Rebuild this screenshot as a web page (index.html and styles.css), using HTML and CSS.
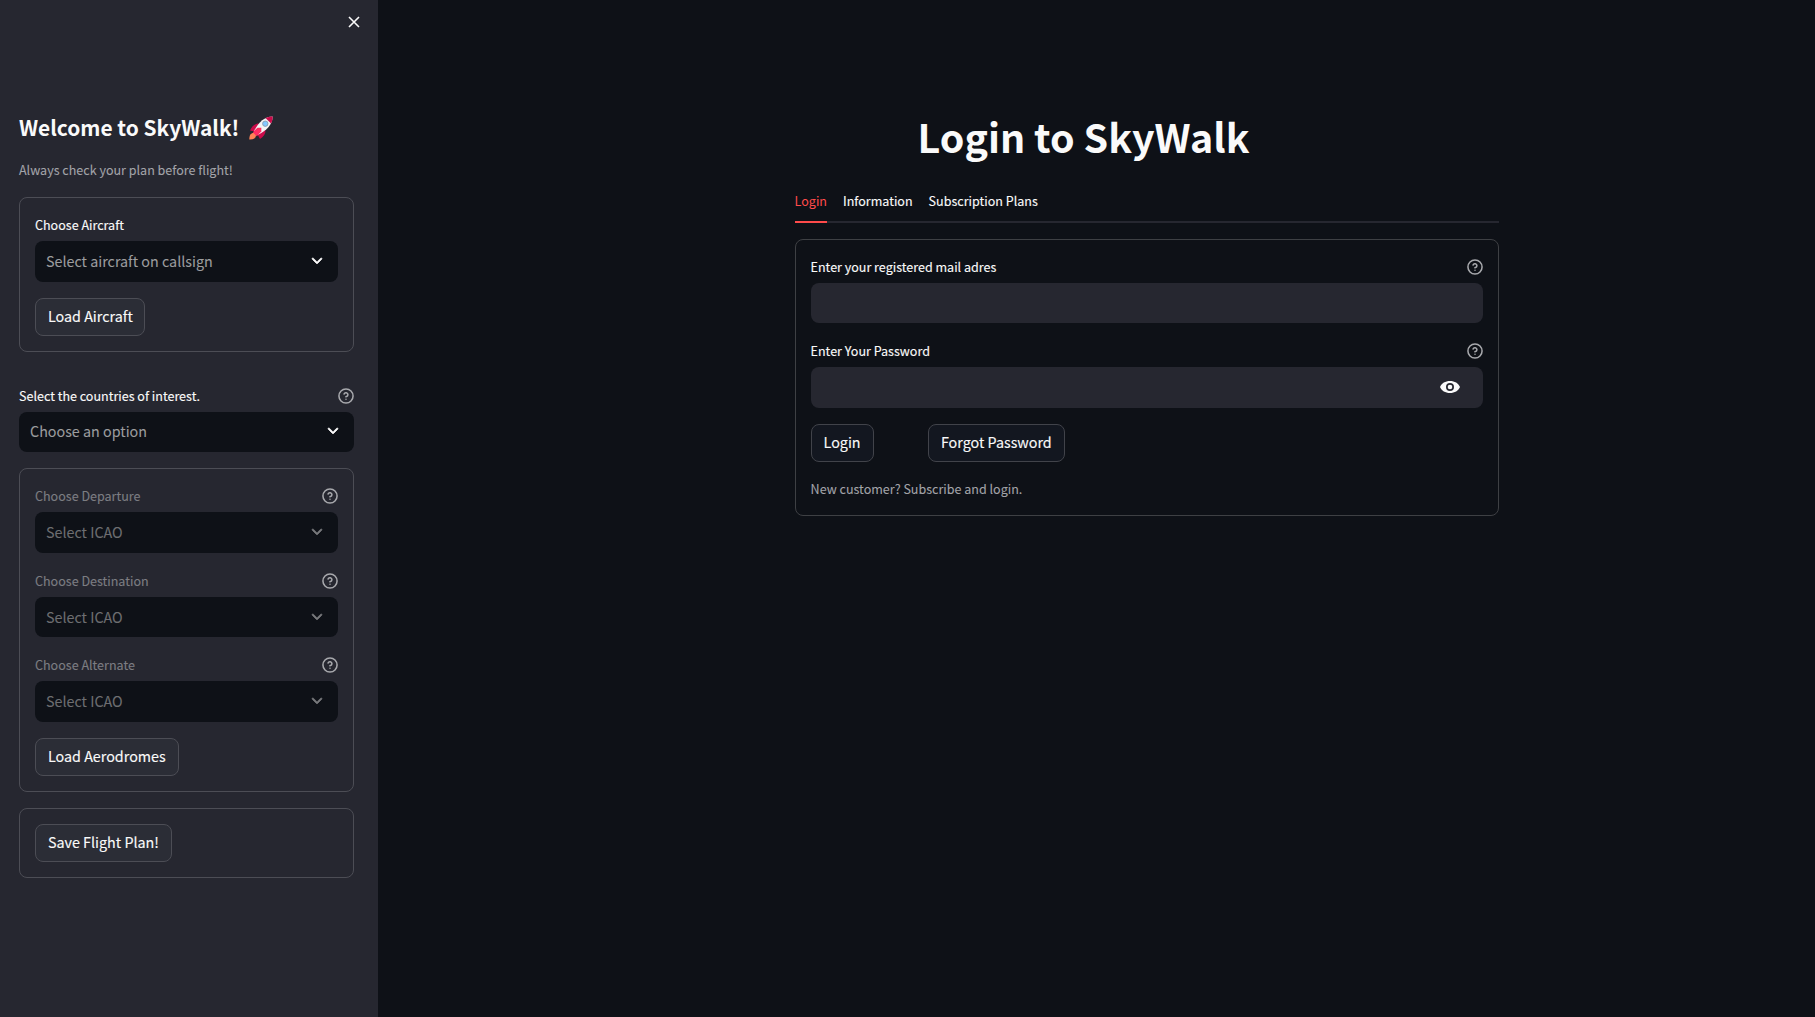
FILE: index.html
```html
<!DOCTYPE html>
<html lang="en">
<head>
<meta charset="utf-8">
<title>SkyWalk</title>
<link rel="stylesheet" href="styles.css">
</head>
<body>
<svg class="defs" aria-hidden="true">
  <symbol id="help" viewBox="0 0 24 24"><g fill="none" stroke="currentColor" stroke-width="2.3" stroke-linecap="round" stroke-linejoin="round"><circle cx="12" cy="12" r="10.6"/><path d="M9.09 9a3 3 0 0 1 5.83 1c0 2-3 3-3 3"/><path d="M12 17h.01"/></g></symbol>
  <symbol id="chevron" viewBox="0 0 24 24"><path fill="currentColor" fill-rule="evenodd" d="M5.707 8.293a1 1 0 0 1 1.414 0L12 13.172l4.879-4.879a1 1 0 1 1 1.414 1.414l-5.586 5.586a1 1 0 0 1-1.414 0L5.707 9.707a1 1 0 0 1 0-1.414z" stroke="currentColor" stroke-width="1"/></symbol>
</svg>
<div class="app">
  <aside class="sidebar">
    <header class="sidebar-top">
      <button class="close" aria-label="Close"><svg viewBox="0 0 12 12"><path d="M1 1l10 10M11 1L1 11" fill="none" stroke="currentColor" stroke-width="1.6"/></svg></button>
    </header>
    <h2 class="welcome"><span>Welcome to SkyWalk!</span>
      <svg class="rocket" viewBox="0 0 24 24">
        <path fill="#ca0b4a" d="M1 14.5C3 10 6 7.500 9.500 7.500L16.500 14.500C16.500 18 14.500 21 11 23L8.500 18.500 5.500 15.500z"/>
        <path fill="#ff8257" d="M5.500 17C2 16.500.300 18.500.300 23.500 5 23.700 7.200 22 7 18.500z"/>
        <path fill="#f4f4f4" d="M23.700.400C16 .500 9.500 5.500 5 15.500L8.500 19C18 14.500 23.600 8 23.700.400z"/>
        <path fill="#ca0b4a" d="M23.700.400C20.800.400 18.500 1.100 16.500 2.100L22 7.600C23.200 5.300 23.700 3 23.700.400z"/>
        <path fill="#ff2e63" d="M3.800 16.200L8.500 11.700 12.300 11.700 12.300 15.500 7.800 20.200z"/>
        <circle cx="16.300" cy="7.700" r="2.700" fill="#83c9ff" stroke="#8797a5" stroke-width=".8"/>
      </svg>
    </h2>
    <p class="caption">Always check your plan before flight!</p>
    <section class="box aircraft">
      <div class="label">Choose Aircraft</div>
      <div class="select"><span>Select aircraft on callsign</span><svg><use href="#chevron"/></svg></div>
      <button class="btn">Load Aircraft</button>
    </section>
    <section class="countries">
      <div class="label"><span>Select the countries of interest.</span><svg><use href="#help"/></svg></div>
      <div class="select"><span>Choose an option</span><svg><use href="#chevron"/></svg></div>
    </section>
    <section class="box">
      <div class="label off"><span>Choose Departure</span><svg><use href="#help"/></svg></div>
      <div class="select off"><span>Select ICAO</span><svg><use href="#chevron"/></svg></div>
      <div class="label off"><span>Choose Destination</span><svg><use href="#help"/></svg></div>
      <div class="select off"><span>Select ICAO</span><svg><use href="#chevron"/></svg></div>
      <div class="label off"><span>Choose Alternate</span><svg><use href="#help"/></svg></div>
      <div class="select off"><span>Select ICAO</span><svg><use href="#chevron"/></svg></div>
      <button class="btn">Load Aerodromes</button>
    </section>
    <section class="box">
      <button class="btn">Save Flight Plan!</button>
    </section>
  </aside>
  <main class="main">
    <div class="content">
      <h1 class="title">Login to SkyWalk</h1>
      <nav class="tabs">
        <a class="tab active">Login</a>
        <a class="tab">Information</a>
        <a class="tab">Subscription Plans</a>
      </nav>
      <form class="box login">
        <div class="label"><span>Enter your registered mail adres</span><svg><use href="#help"/></svg></div>
        <div class="input"></div>
        <div class="label"><span>Enter Your Password</span><svg><use href="#help"/></svg></div>
        <div class="input"><svg viewBox="0 0 20 12"><path fill="currentColor" fill-rule="evenodd" d="M10 0C5.300 0 1.500 2.300 0 6c1.500 3.700 5.300 6 10 6s8.500-2.300 10-6C18.500 2.300 14.700 0 10 0zm0 10a4 4 0 1 1 0-8 4 4 0 0 1 0 8zm0-6.300a2.300 2.300 0 1 0 0 4.600 2.300 2.300 0 0 0 0-4.600z"/></svg></div>
        <div class="actions">
          <button type="button" class="btn">Login</button>
          <button type="button" class="btn">Forgot Password</button>
        </div>
        <p class="caption">New customer? Subscribe and login.</p>
      </form>
    </div>
  </main>
</div>
</body>
</html>
```
FILE: styles.css
```css
* { box-sizing: border-box; }
body {
  margin: 0;
  background: #0e1117;
  color: #fafafa;
  font-family: "Noto Sans CJK SC", "Noto Sans", sans-serif;
  font-size: 14.32px;
}
.defs { position: absolute; width: 0; height: 0; }
.app { display: flex; height: 1017px; overflow: hidden; }
.sidebar { width: 378px; flex: none; padding: 0 24px 0 19px; background: #262730; }
.sidebar-top { display: flex; justify-content: flex-end; height: 108px; padding: 16px 0 0; margin-right: -6px; }
.close { width: 12px; height: 12px; padding: 0; border: 0; background: none; color: #fafafa; }
.close svg { display: block; width: 12px; height: 12px; }
.welcome { display: flex; align-items: center; gap: 9.6px; height: 40px; margin: 0; font-size: 20.9px; font-weight: 600; line-height: 38px; white-space: nowrap; }
.welcome span { padding-bottom: 2px; }
.rocket { width: 24px; height: 24px; margin-bottom: 1px; }
.caption { margin: 0; font-size: 12.54px; line-height: 20px; color: #a3a4a9; -webkit-text-stroke: .08px; }
.sidebar > .caption { padding-top: 12px; height: 49px; }

.box { border: 1px solid #4c4d55; border-radius: 8px; padding: 15px; margin-bottom: 15.8px; }
.label { display: flex; justify-content: space-between; height: 28.4px; font-size: 12.54px; line-height: 24px; white-space: nowrap; -webkit-text-stroke: .12px; }
.label svg { width: 16px; height: 16px; margin-top: 4px; color: #a8a9ad; }
.label.off { color: #7c7d82; }
.select { display: flex; align-items: center; justify-content: space-between; height: 40.4px; margin-bottom: 16px; padding: 0 12px 0 11px; border-radius: 8px; background: #0e1117; color: #9c9d9f; white-space: nowrap; -webkit-text-stroke: .08px; }
.select span { padding-bottom: 2px; }
.select svg { width: 18px; height: 18px; margin-bottom: 1px; color: #fafafa; }
.select.off { color: #6d6e71; }
.select.off svg { color: #77787b; }
.select.off + .label { margin-top: 15.7px; }
.select:has(+ .label) { margin-bottom: 0; }
.aircraft { margin-bottom: 31.7px; }
.countries .label { height: 27.7px; }
.countries .select { margin-bottom: 16.1px; }
.aircraft .btn { padding-right: 11.4px; }
.btn { display: block; height: 38.4px; padding: 0 12px 2px; border: 1px solid #4c4d55; border-radius: 8px; background: #2b2d36; color: #fafafa; font: inherit; line-height: 34px; white-space: nowrap; -webkit-text-stroke: .12px; }

.main { flex: 1; padding-left: 416.6px; }
.content { width: 704px; }
.title { margin: 0; padding: 107px 0 0 123px; height: 184px; font-size: 39.4px; font-weight: 700; line-height: 58px; white-space: nowrap; }
.tabs { display: flex; gap: 16px; height: 39px; margin-bottom: 16px; box-shadow: inset 0 -2px #262730; font-size: 12.54px; line-height: 33px; -webkit-text-stroke: .12px; }
.tab.active { color: #ff4b4b; border-bottom: 2px solid #ff4b4b; -webkit-text-stroke: 0; }
.login { height: 277px; padding-top: 14.6px; border-color: #3e4044; }
.input { display: flex; align-items: center; justify-content: flex-end; height: 40.4px; padding: 0 22.6px 2px 0; border-radius: 8px; background: #262730; }
.input + .label { margin-top: 15.6px; }
.input svg { width: 20px; height: 12px; }
.actions { display: flex; gap: 54.3px; margin-top: 16px; }
.actions .btn { background: #131720; border-color: #41434a; }
.login .caption { margin-top: 17px; }
```
